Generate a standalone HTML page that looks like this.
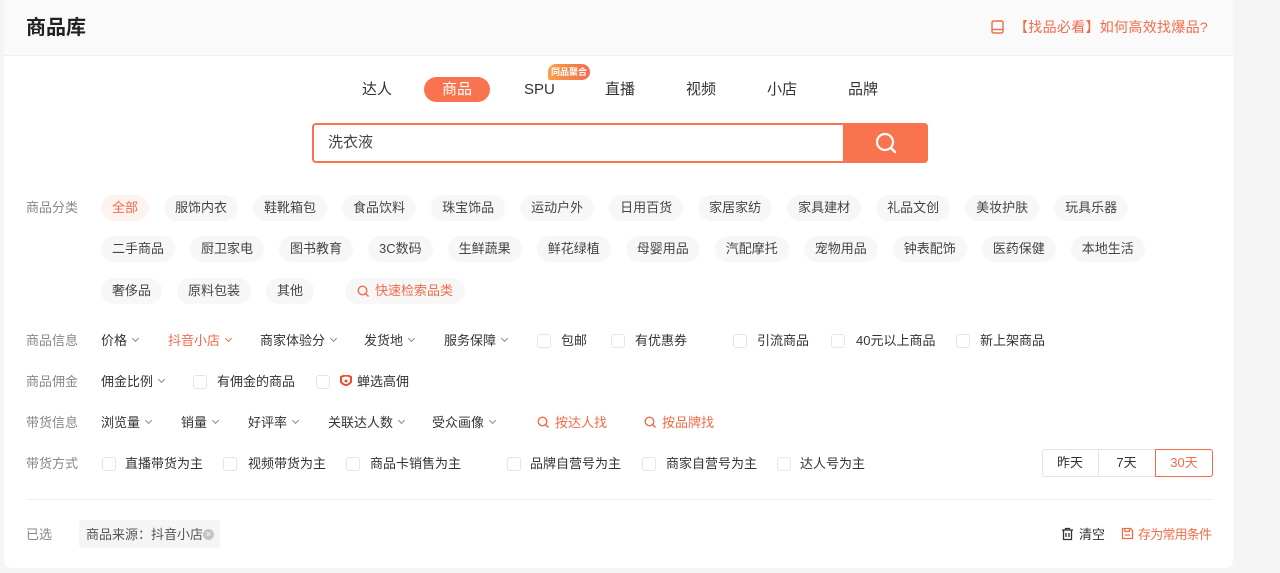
<!DOCTYPE html>
<html><head><meta charset="utf-8"><style>
*{margin:0;padding:0;box-sizing:border-box}
body{width:1280px;height:573px;background:#f5f5f5;font-family:"Liberation Sans","Noto Sans CJK SC",sans-serif;font-size:13px;color:#333;position:relative;overflow:hidden}
.card{position:absolute;left:4px;top:0;width:1229px;height:568px;background:#fff;border-radius:0 0 8px 8px}
.hdr{position:absolute;left:0;top:0;width:1229px;height:56px;background:#fafafa;border-bottom:1px solid #f0f0f0}
.a{position:absolute;white-space:nowrap;line-height:18px}
.lbl{color:#888}
.tab{font-size:15px;color:#333}
.chips{position:absolute;left:101px;display:flex;gap:15px}
.chip{height:26px;line-height:26px;padding:0 11px;background:#f7f7f7;border-radius:13px;color:#444}
.cb{position:absolute;width:14px;height:14px;border:1px solid #e5e5e5;border-radius:3px;background:#fff}
.dd::after{content:"";display:inline-block;width:4px;height:4px;border-right:1px solid #888;border-bottom:1px solid #888;transform:rotate(45deg);margin-left:6px;vertical-align:4px}
.or{color:#f26b4a}
.or.dd::after{border-color:#f26b4a}
</style></head><body>
<div class="card">
<div class="hdr"></div>
</div>
<div class="a" style="left:26px;top:16px;font-size:20px;font-weight:bold;line-height:24px;color:#222">商品库</div>
<svg class="a" style="left:991px;top:20px" width="13" height="14" viewBox="0 0 13 14"><rect x="1" y="1" width="11" height="12" rx="1.5" fill="none" stroke="#f26b4a" stroke-width="1.4"/><line x1="1" y1="9.5" x2="12" y2="9.5" stroke="#f26b4a" stroke-width="1.4"/></svg>
<div class="a or" style="left:1014px;top:18px;font-size:14px;letter-spacing:0.3px">【找品必看】如何高效找爆品?</div>

<div class="a tab" style="left:362px;top:81px">达人</div>
<div class="a" style="left:424px;top:77px;width:66px;height:25px;border-radius:13px;background:#f9734f;color:#fff;font-size:15px;line-height:25px;text-align:center">商品</div>
<div class="a tab" style="left:524px;top:81px">SPU</div>
<div class="a" style="left:548px;top:64px;width:42px;height:16px;border-radius:8px 8px 8px 2px;background:linear-gradient(90deg,#f7a04a,#f36d4e);color:#fff;font-size:9px;line-height:16px;text-align:center;font-weight:bold">同品聚合</div>
<div class="a tab" style="left:605px;top:81px">直播</div>
<div class="a tab" style="left:686px;top:81px">视频</div>
<div class="a tab" style="left:767px;top:81px">小店</div>
<div class="a tab" style="left:848px;top:81px">品牌</div>

<div class="a" style="left:312px;top:123px;width:616px;height:40px;border:2px solid #f9734f;border-radius:4px;background:#fff"></div>
<div class="a" style="left:843px;top:123px;width:85px;height:40px;background:#f9734f;border-radius:0 4px 4px 0"></div>
<svg class="a" style="left:874px;top:131px" width="24" height="24" viewBox="0 0 24 24"><circle cx="11" cy="11" r="8" fill="none" stroke="#fff" stroke-width="2.2"/><line x1="17" y1="17" x2="21" y2="21" stroke="#fff" stroke-width="2.4" stroke-linecap="round"/></svg>
<div class="a" style="left:328px;top:134px;font-size:15px;color:#444">洗衣液</div>

<div class="a lbl" style="left:26px;top:199px">商品分类</div>
<div class="chips" style="top:195px"><span class="chip" style="background:#fff3ef;color:#f26b4a">全部</span><span class="chip">服饰内衣</span><span class="chip">鞋靴箱包</span><span class="chip">食品饮料</span><span class="chip">珠宝饰品</span><span class="chip">运动户外</span><span class="chip">日用百货</span><span class="chip">家居家纺</span><span class="chip">家具建材</span><span class="chip">礼品文创</span><span class="chip">美妆护肤</span><span class="chip">玩具乐器</span></div>
<div class="chips" style="top:236px"><span class="chip">二手商品</span><span class="chip">厨卫家电</span><span class="chip">图书教育</span><span class="chip">3C数码</span><span class="chip">生鲜蔬果</span><span class="chip">鲜花绿植</span><span class="chip">母婴用品</span><span class="chip">汽配摩托</span><span class="chip">宠物用品</span><span class="chip">钟表配饰</span><span class="chip">医药保健</span><span class="chip">本地生活</span></div>
<div class="chips" style="top:278px"><span class="chip">奢侈品</span><span class="chip">原料包装</span><span class="chip">其他</span><span class="chip" style="color:#f26b4a;padding-left:30px;padding-right:12px;margin-left:16px;position:relative">快速检索品类<svg style="position:absolute;left:12px;top:7px" width="13" height="13" viewBox="0 0 13 13"><circle cx="5.5" cy="5.5" r="4.3" fill="none" stroke="#f26b4a" stroke-width="1.4"/><line x1="8.7" y1="8.7" x2="11.5" y2="11.5" stroke="#f26b4a" stroke-width="1.5"/></svg></span></div>

<div class="a lbl" style="left:26px;top:332px">商品信息</div>
<div class="a dd" style="left:101px;top:332px">价格</div>
<div class="a dd or" style="left:168px;top:332px">抖音小店</div>
<div class="a dd" style="left:260px;top:332px">商家体验分</div>
<div class="a dd" style="left:364px;top:332px">发货地</div>
<div class="a dd" style="left:444px;top:332px">服务保障</div>
<div class="cb" style="left:537px;top:334px"></div><div class="a" style="left:561px;top:332px">包邮</div>
<div class="cb" style="left:611px;top:334px"></div><div class="a" style="left:635px;top:332px">有优惠券</div>
<div class="cb" style="left:733px;top:334px"></div><div class="a" style="left:757px;top:332px">引流商品</div>
<div class="cb" style="left:831px;top:334px"></div><div class="a" style="left:856px;top:332px">40元以上商品</div>
<div class="cb" style="left:956px;top:334px"></div><div class="a" style="left:980px;top:332px">新上架商品</div>

<div class="a lbl" style="left:26px;top:373px">商品佣金</div>
<div class="a dd" style="left:101px;top:373px">佣金比例</div>
<div class="cb" style="left:193px;top:375px"></div><div class="a" style="left:217px;top:373px">有佣金的商品</div>
<div class="cb" style="left:316px;top:375px"></div>
<svg class="a" style="left:339px;top:375px" width="14" height="13" viewBox="0 0 14 13"><path d="M2 2 Q7 -1 12 2 L12 7 Q7 13 2 7 Z" fill="none" stroke="#f24a2a" stroke-width="2"/><circle cx="7" cy="6" r="1.5" fill="#f24a2a"/></svg>
<div class="a" style="left:357px;top:373px">蝉选高佣</div>

<div class="a lbl" style="left:26px;top:414px">带货信息</div>
<div class="a dd" style="left:101px;top:414px">浏览量</div>
<div class="a dd" style="left:181px;top:414px">销量</div>
<div class="a dd" style="left:248px;top:414px">好评率</div>
<div class="a dd" style="left:328px;top:414px">关联达人数</div>
<div class="a dd" style="left:432px;top:414px">受众画像</div>
<svg class="a" style="left:537px;top:416px" width="13" height="13" viewBox="0 0 13 13"><circle cx="5.5" cy="5.5" r="4.3" fill="none" stroke="#f26b4a" stroke-width="1.4"/><line x1="8.7" y1="8.7" x2="11.5" y2="11.5" stroke="#f26b4a" stroke-width="1.5"/></svg>
<div class="a or" style="left:555px;top:414px">按达人找</div>
<svg class="a" style="left:644px;top:416px" width="13" height="13" viewBox="0 0 13 13"><circle cx="5.5" cy="5.5" r="4.3" fill="none" stroke="#f26b4a" stroke-width="1.4"/><line x1="8.7" y1="8.7" x2="11.5" y2="11.5" stroke="#f26b4a" stroke-width="1.5"/></svg>
<div class="a or" style="left:662px;top:414px">按品牌找</div>

<div class="a lbl" style="left:26px;top:455px">带货方式</div>
<div class="cb" style="left:102px;top:457px"></div><div class="a" style="left:125px;top:455px">直播带货为主</div>
<div class="cb" style="left:223px;top:457px"></div><div class="a" style="left:248px;top:455px">视频带货为主</div>
<div class="cb" style="left:346px;top:457px"></div><div class="a" style="left:370px;top:455px">商品卡销售为主</div>
<div class="cb" style="left:507px;top:457px"></div><div class="a" style="left:530px;top:455px">品牌自营号为主</div>
<div class="cb" style="left:642px;top:457px"></div><div class="a" style="left:666px;top:455px">商家自营号为主</div>
<div class="cb" style="left:777px;top:457px"></div><div class="a" style="left:800px;top:455px">达人号为主</div>

<div class="a" style="left:1042px;top:449px;width:171px;height:28px;border:1px solid #e5e5e5;border-radius:3px"></div>
<div class="a" style="left:1098px;top:450px;width:1px;height:26px;background:#e5e5e5"></div>
<div class="a" style="left:1042px;top:454px;width:56px;text-align:center">昨天</div>
<div class="a" style="left:1098px;top:454px;width:57px;text-align:center">7天</div>
<div class="a or" style="left:1155px;top:449px;width:58px;height:28px;border:1px solid #f26b4a;border-radius:0 3px 3px 0;text-align:center;line-height:26px">30天</div>

<div class="a" style="left:26px;top:499px;width:1187px;height:1px;background:#f0f0f0"></div>

<div class="a lbl" style="left:26px;top:526px">已选</div>
<div class="a" style="left:79px;top:520px;width:141px;height:28px;background:#f5f5f5;border-radius:3px"></div>
<div class="a" style="left:86px;top:526px;color:#555">商品来源：抖音小店</div>
<div class="a" style="left:203px;top:529px;width:11px;height:11px;border-radius:50%;background:#c4c4c4;color:#fff;font-size:9px;line-height:11px;text-align:center">×</div>

<svg class="a" style="left:1061px;top:527px" width="13" height="14" viewBox="0 0 13 14"><path d="M1 3H12M4.5 3V1.5H8.5V3M2.5 3V12.5H10.5V3M5 6V10M8 6V10" fill="none" stroke="#333" stroke-width="1.3"/></svg>
<div class="a" style="left:1079px;top:526px">清空</div>
<svg class="a" style="left:1121px;top:527px" width="13" height="13" viewBox="0 0 13 13"><path d="M1.5 1.5H9.5L11.5 3.5V11.5H1.5Z M4 1.5V4.5H8.5V1.5 M4 8H9" fill="none" stroke="#f26b4a" stroke-width="1.3"/></svg>
<div class="a or" style="left:1138px;top:526px;letter-spacing:-0.8px">存为常用条件</div>
</body></html>
